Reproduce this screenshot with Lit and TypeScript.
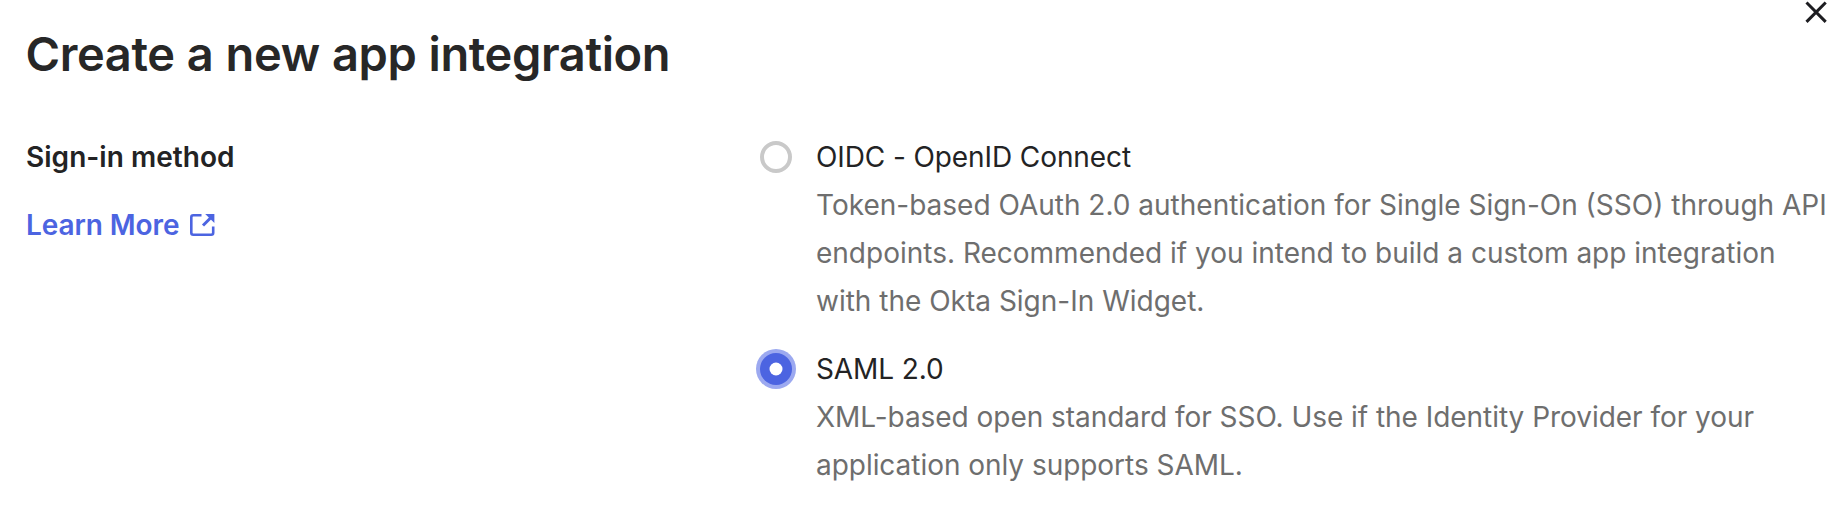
import { LitElement, html, svg, css } from "lit";
import { customElement } from "lit/decorators.js";

interface Option {
  label: string;
  checked: boolean;
  lines: string[];
}

const OPTIONS: Option[] = [
  {
    label: "OIDC - OpenID Connect",
    checked: false,
    lines: [
      "Token-based OAuth 2.0 authentication for Single Sign-On (SSO) through API",
      "endpoints. Recommended if you intend to build a custom app integration",
      "with the Okta Sign-In Widget.",
    ],
  },
  {
    label: "SAML 2.0",
    checked: true,
    lines: [
      "XML-based open standard for SSO. Use if the Identity Provider for your",
      "application only supports SAML.",
    ],
  },
];

@customElement("app-root")
class AppRoot extends LitElement {
  static styles = css`
    :host { display: block; height: 508px; background: #fff; overflow: hidden; position: relative; font-family: Inter, sans-serif; font-size: 28px; line-height: 48px; color: #232324; }
    * { box-sizing: border-box; }
    .close { position: absolute; top: 0; right: 16px; width: 24px; height: 24px; padding: 0; border: 0; background: none; }
    .close svg { display: block; }
    h1 { margin: 0; padding: 22px 0 0 25.5px; font-size: 47px; line-height: 64px; font-weight: 600; letter-spacing: -0.38px; word-spacing: 0.7px; white-space: nowrap; color: #272727; }
    .body { display: grid; grid-template-columns: 732px 1fr; padding: 47px 0 0 26px; }
    .legend { font-weight: 600; letter-spacing: 0.03px; }
    .more { display: flex; align-items: center; gap: 10px; margin-top: 20px; color: #4c64e1; font-weight: 600; letter-spacing: -0.08px; text-decoration: none; }
    .more svg { display: block; }
    .option { display: grid; grid-template-columns: 58px 1fr; margin-bottom: 20px; white-space: nowrap; }
    .label { letter-spacing: -0.1px; }
    .desc { color: #6e6e6e; }
    .option.checked .desc { letter-spacing: -0.04px; }
    .radio { display: block; margin: 4px 0 0 -2px; }
  `;

  radio(checked: boolean) {
    return html`<svg class="radio" width="40" height="40" viewBox="0 0 40 40" role="radio" aria-checked=${checked}>
      ${checked
        ? svg`<circle cx="20" cy="20" r="20" fill="#9ca9f0" /><circle cx="20" cy="20" r="16" fill="#4c64e1" /><circle cx="20" cy="20" r="6.5" fill="#fff" />`
        : svg`<circle cx="20" cy="20" r="14" fill="#fff" stroke="#c9c9c9" stroke-width="4" />`}
    </svg>`;
  }

  render() {
    return html`
      <button class="close" aria-label="Close">
        <svg width="24" height="24" viewBox="0 0 24 24" fill="none" stroke="#1d1d21" stroke-width="3"><path d="M2.5 2.5L21.7 21.9M21.7 2.5L2.5 21.9" /></svg>
      </button>
      <h1>Create a new app integration</h1>
      <div class="body">
        <div>
          <div class="legend">Sign-in method</div>
          <a class="more">
            <span>Learn More</span>
            <svg width="26" height="24" viewBox="0 0 26 24" fill="none" stroke="#4c64e1" stroke-width="2.6"><path d="M12.5 2.3H4.3Q2.3 2.3 2.3 4.3V19.7Q2.3 21.7 4.3 21.7H22.2Q24.2 21.7 24.2 19.7V13.5" /><path d="M14 12.5L23 3.5" stroke-width="3" /><path d="M16.2 1H25.4V9.9Z" fill="#4c64e1" stroke="none" /></svg>
          </a>
        </div>
        <div>
          ${OPTIONS.map(
            (o) => html`<div class="option ${o.checked ? "checked" : ""}">
              ${this.radio(o.checked)}
              <div>
                <div class="label">${o.label}</div>
                ${o.lines.map((l) => html`<div class="desc">${l}</div>`)}
              </div>
            </div>`
          )}
        </div>
      </div>`;
  }
}
